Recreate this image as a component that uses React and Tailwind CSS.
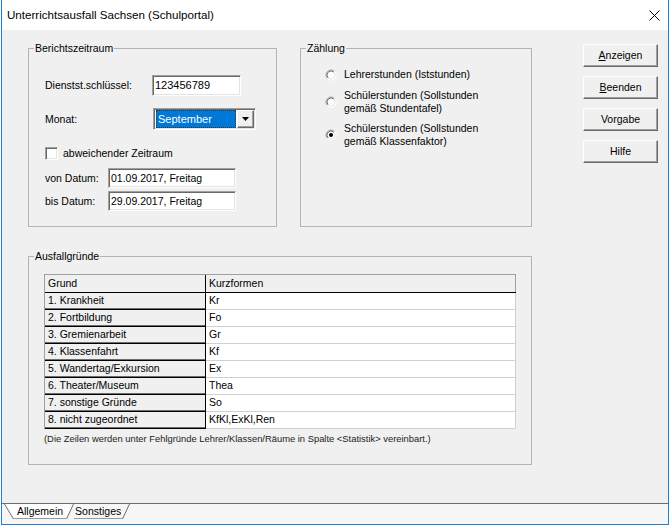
import React from "react";

const reasons = [
  ["1. Krankheit", "Kr"],
  ["2. Fortbildung", "Fo"],
  ["3. Gremienarbeit", "Gr"],
  ["4. Klassenfahrt", "Kf"],
  ["5. Wandertag/Exkursion", "Ex"],
  ["6. Theater/Museum", "Thea"],
  ["7. sonstige Gründe", "So"],
  ["8. nicht zugeordnet", "KfKl,ExKl,Ren"],
];

// classic sunken 3d edge for edit fields
const sunken =
  "border border-t-[#a0a0a0] border-l-[#a0a0a0] border-b-white border-r-white shadow-[inset_1px_1px_0_#696969,inset_-1px_-1px_0_#e3e3e3]";
const raised =
  "border border-t-white border-l-white border-b-[#696969] border-r-[#696969] shadow-[inset_-1px_-1px_0_#a0a0a0]";

const Radio = ({ checked }) => (
  <svg width="12" height="12" viewBox="0 0 12 12" className="shrink-0">
    <circle cx="6" cy="6" r="5" fill="#fff" stroke="#fff" />
    <path d="M2.46 9.54 A5 5 0 0 1 9.54 2.46" fill="none" stroke="#a0a0a0" />
    <path d="M3.17 8.83 A4 4 0 0 1 8.83 3.17" fill="none" stroke="#696969" />
    <path d="M9.54 2.46 A5 5 0 0 1 2.46 9.54" fill="none" stroke="#ffffff" />
    <path d="M8.83 3.17 A4 4 0 0 1 3.17 8.83" fill="none" stroke="#e3e3e3" />
    {checked && <circle cx="6" cy="6" r="2" fill="#000" />}
  </svg>
);

const GroupBox = ({ title, className, children }) => (
  <fieldset className={`m-0 p-0 border border-[#b4b4b4] ${className}`}>
    <legend className="ml-[5px] px-[1px] leading-[13px]">{title}</legend>
    {children}
  </fieldset>
);

const Button = ({ children }) => (
  <button
    className={`h-[23px] w-[75px] bg-[#f0f0f0] text-[10.5px] text-black ${raised}`}
  >
    {children}
  </button>
);

export default function App() {
  return (
    <div className="w-[672px] h-[528px] bg-white font-['Liberation_Sans',Arial,sans-serif] text-[10.5px] text-black">
      <div className="ml-px w-[668px] h-[525px] flex flex-col border-x border-b border-[#1c7fd6]">
        {/* Title bar */}
        <div className="h-[30px] shrink-0 bg-white flex items-center justify-between pl-[5px] pr-[8px]">
          <span className="text-[11.6px]">
            Unterrichtsausfall Sachsen (Schulportal)
          </span>
          <svg width="11" height="11" viewBox="0 0 11 11">
            <path d="M0.5 0.5 L10.5 10.5 M10.5 0.5 L0.5 10.5" stroke="#000" strokeWidth="1" />
          </svg>
        </div>

        {/* Dialog body */}
        <div className="h-[473px] shrink-0 bg-[#f0f0f0] flex items-start pl-[26px] pt-[12px]">
          <div className="w-[504px] flex flex-col">
            <div className="flex gap-[23px]">
              <GroupBox title="Berichtszeitraum" className="w-[249px] h-[185px]">
                <div className="flex flex-col pl-[16px] leading-[13px]">
                  <div className="mt-[20px] h-[21px] flex items-center">
                    <span className="w-[107px]">Dienstst.schlüssel:</span>
                    <div className={`w-[89px] h-[21px] bg-white flex items-center pl-[2px] ${sunken}`}>
                      <span className="text-[11px]">123456789</span>
                    </div>
                  </div>
                  <div className="mt-[12px] h-[22px] flex items-center">
                    <span className="w-[108px]">Monat:</span>
                    <div className={`w-[103px] h-[22px] bg-white flex items-center p-[1px] ${sunken}`}>
                      <div className="flex-1 h-[18px] ml-[1px] bg-[#0078d7] border border-dotted border-[#333] flex items-center pl-[1px]">
                        <span className="text-white text-[11px]">September</span>
                      </div>
                      <div className={`w-[17px] h-[18px] ml-[1px] bg-[#f0f0f0] flex items-center justify-center ${raised}`}>
                        <svg width="7" height="4" viewBox="0 0 7 4">
                          <path d="M0 0 H7 L3.5 4 Z" fill="#000" />
                        </svg>
                      </div>
                    </div>
                  </div>
                  <div className="mt-[17px] h-[13px] flex items-center gap-[5px]">
                    <div className={`w-[13px] h-[13px] bg-white ${sunken}`} />
                    <span>abweichender Zeitraum</span>
                  </div>
                  <div className="mt-[8px] h-[20px] flex items-center">
                    <span className="w-[63px]">von Datum:</span>
                    <div className={`w-[128px] h-[20px] bg-white flex items-center pl-[2px] ${sunken}`}>
                      <span>01.09.2017, Freitag</span>
                    </div>
                  </div>
                  <div className="mt-[3px] h-[20px] flex items-center">
                    <span className="w-[63px]">bis Datum:</span>
                    <div className={`w-[128px] h-[20px] bg-white flex items-center pl-[2px] ${sunken}`}>
                      <span>29.09.2017, Freitag</span>
                    </div>
                  </div>
                </div>
              </GroupBox>

              <GroupBox title="Zählung" className="w-[232px] h-[185px]">
                <div className="flex flex-col pl-[24px] leading-[13px]">
                  <div className="mt-[13px] flex items-center gap-[7px]">
                    <Radio />
                    <span>Lehrerstunden (Iststunden)</span>
                  </div>
                  <div className="mt-[8px] flex items-center gap-[7px]">
                    <Radio />
                    <span>
                      Schülerstunden (Sollstunden
                      <br />
                      gemäß Stundentafel)
                    </span>
                  </div>
                  <div className="mt-[7px] flex items-center gap-[7px]">
                    <Radio checked />
                    <span>
                      Schülerstunden (Sollstunden
                      <br />
                      gemäß Klassenfaktor)
                    </span>
                  </div>
                </div>
              </GroupBox>
            </div>

            <GroupBox title="Ausfallgründe" className="mt-[23px] w-[504px] h-[215px]">
              <div className="ml-[15px] mt-[11px] w-[472px] border-l border-t border-[#a0a0a0]">
                <div className="flex h-[18px] border-b border-black">
                  <div className="w-[161px] bg-[#f0f0f0] border-r border-black pl-[3px] flex items-center">
                    Grund
                  </div>
                  <div className="flex-1 bg-[#f0f0f0] border-r border-[#a0a0a0] pl-[3px] flex items-center">
                    Kurzformen
                  </div>
                </div>
                {reasons.map(([grund, kurz]) => (
                  <div key={grund} className="flex h-[17px]">
                    <div className="w-[161px] bg-[#f0f0f0] border-r border-b border-black shadow-[inset_0_-1px_0_#6d6d6d] pl-[3px] flex items-center">
                      {grund}
                    </div>
                    <div className="flex-1 bg-white border-b border-r border-[#d0d0d0] pl-[3px] flex items-center">
                      {kurz}
                    </div>
                  </div>
                ))}
              </div>
              <p className="ml-[15px] mt-[4px] text-[9.4px] leading-[12px] text-[#222]">
                (Die Zeilen werden unter Fehlgründe Lehrer/Klassen/Räume in Spalte &lt;Statistik&gt; vereinbart.)
              </p>
            </GroupBox>
          </div>

          <div className="ml-[51px] mt-[2px] flex flex-col gap-[9px]">
            <Button>
              <span className="underline">A</span>nzeigen
            </Button>
            <Button>
              <span className="underline">B</span>eenden
            </Button>
            <Button>Vorgabe</Button>
            <Button>Hilfe</Button>
          </div>
        </div>

        {/* Sheet tabs */}
        <div className="h-[21px] shrink-0 border-t border-[#6d6d6d] bg-[#f6f6f6] flex items-start pl-[2px]">
          <svg width="10" height="15" viewBox="0 0 10 15" className="shrink-0">
            <polygon points="0,0 10,0 10,15" fill="#fff" />
            <path d="M0.5 0 L9.5 15" stroke="#6d6d6d" />
          </svg>
          <span className="h-[15px] bg-white border-b border-[#9a9a9a] leading-[15px] px-[3px]">
            Allgemein
          </span>
          <svg width="8" height="15" viewBox="0 0 8 15" className="shrink-0">
            <polygon points="0,0 8,0 0,15" fill="#fff" />
            <path d="M0.5 15 L7.5 0" stroke="#6d6d6d" />
          </svg>
          <span className="h-[15px] border-b border-[#9a9a9a] leading-[15px] px-[1px]">
            Sonstiges
          </span>
          <svg width="8" height="15" viewBox="0 0 8 15" className="shrink-0">
            <path d="M0.5 15 L7.5 0" stroke="#6d6d6d" />
          </svg>
        </div>
      </div>
    </div>
  );
}
